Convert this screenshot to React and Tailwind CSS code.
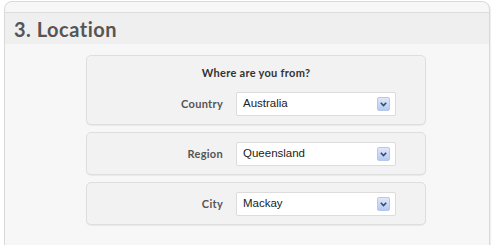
import React from "react";

function Chevron() {
  return (
    <div className="w-[13px] h-[14px] rounded-[2px] border border-[#b7c8ec] bg-gradient-to-b from-[#dfe8fb] to-[#b5c9f2] flex items-center justify-center">
      <svg width="7" height="5" viewBox="0 0 7 5">
        <path d="M0.8 0.8 L3.5 3.6 L6.2 0.8" stroke="#3b4a6b" strokeWidth="1.6" fill="none" />
      </svg>
    </div>
  );
}

function Select({ value }) {
  return (
    <div className="w-[160px] h-[24px] bg-white border border-[#dcdcdc] rounded-[2px] flex items-center justify-between pl-[6px] pr-[5px]">
      <span className="text-[11.5px] text-[#222] font-['Liberation_Sans',sans-serif]">{value}</span>
      <Chevron />
    </div>
  );
}

function Row({ label, value }) {
  return (
    <div className="flex items-center h-[24px]">
      <div className="w-[136px] text-right text-[11px] leading-[14px] font-bold text-[#555] tracking-[0.3px] font-['Lato',sans-serif]">{label}</div>
      <div className="ml-[13px]">
        <Select value={value} />
      </div>
    </div>
  );
}

function Box({ children }) {
  return (
    <div className="w-[340px] bg-[#f2f2f2] border border-[#dedede] rounded-[5px] shadow-[0_1px_1px_rgba(0,0,0,0.06)] pt-[9px] pb-[8px]">
      {children}
    </div>
  );
}

export default function App() {
  return (
    <div className="w-[492px] h-[245px] bg-white overflow-hidden">
      <div className="ml-[4px] mt-[1px] w-[486px] h-[270px] bg-[#f7f7f7] border border-[#d9d9d9] rounded-[8px] shadow-[1px_1px_1px_rgba(0,0,0,0.07)] pt-[10px]">
        <div className="h-[32px] bg-[#efefef] border-t border-[#dcdcdc] flex items-center pl-[9px]">
          <span className="text-[20px] font-bold text-[#555] tracking-[0.5px] font-['Lato',sans-serif]">3. Location</span>
        </div>
        <div className="ml-[81px] mt-[11px] flex flex-col gap-[7px]">
          <Box>
            <div className="text-center text-[11px] font-bold text-[#333] tracking-[0.3px] font-['Lato',sans-serif] leading-[16px] mb-[11px]">
              Where are you from?
            </div>
            <Row label="Country" value="Australia" />
          </Box>
          <Box>
            <Row label="Region" value="Queensland" />
          </Box>
          <Box>
            <Row label="City" value="Mackay" />
          </Box>
        </div>
      </div>
    </div>
  );
}
